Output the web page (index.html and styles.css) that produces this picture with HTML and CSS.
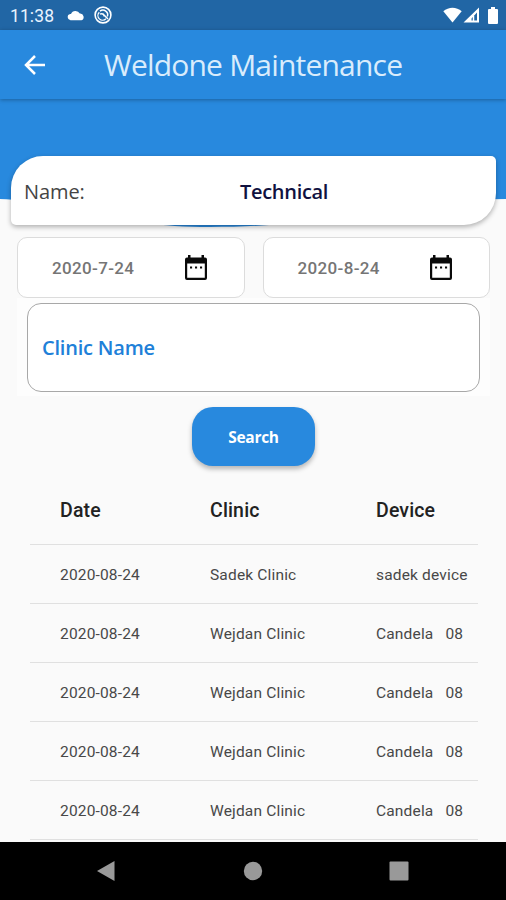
FILE: index.html
```html
<!DOCTYPE html>
<html lang="en">
<head>
  <meta charset="UTF-8"/>
  <meta name="viewport" content="width=device-width, initial-scale=1.0"/>
  <title>Weldone Maintenance</title>
  <link rel="stylesheet" href="styles.css">
</head>
<body>
  <!-- Status bar -->
  <div class="status">
    <span class="clock">11:38</span>
    <svg class="cloud" width="18" height="12" viewBox="0 0 18 12"><path d="M3.500 11.300a3.200 3.200 0 0 1-.3-6.300H4A4.800 4.800 0 0 1 12.800 4.600 3.500 3.500 0 0 1 14.500 11.300z" fill="#fff"/></svg>
    <svg width="18" height="18" viewBox="0 0 18 18" fill="none" stroke="#fff">
      <circle cx="9" cy="9" r="7.9" stroke-width="1.6"/>
      <path d="M5.300 6.200A4.700 4.700 0 1 0 12 12.800" stroke-width="1.300"/>
      <path d="M6 5.200A4.700 4.700 0 0 1 13.300 10.600" stroke-width="1.500"/>
      <path d="M6 8.200c2-1 4 .2 4.300 2.300M8.500 7.500l5.500 5.500" stroke-width="1.500"/>
    </svg>
    <div class="signals">
      <svg width="19" height="16" viewBox="0 0 19 16"><path d="M9.500 15.500.3 4.300C5.500-.4 13.500-.4 18.700 4.300z" fill="#fff"/></svg>
      <svg width="17" height="16" viewBox="0 0 17 16"><path d="M16 .5V15.500H.5zM14 5.500 8.500 11.500V13.600H14z" fill="#fff" fill-rule="evenodd"/><path d="M10.500 9V14" stroke="#fff" stroke-width="1.500"/></svg>
      <svg class="battery" width="10" height="17" viewBox="0 0 10 17"><path d="M3 0h4v2h2q1 0 1 1v13q0 1-1 1H1q-1 0-1-1V3q0-1 1-1h2z" fill="#fff"/></svg>
    </div>
  </div>

  <header>
    <svg class="back" width="22" height="20" viewBox="0 0 22 20"><path d="M21 10H2.500M11 1 2 10l9 9" fill="none" stroke="#fff" stroke-width="2.500"/></svg>
    <h1>Weldone Maintenance</h1>
  </header>

  <main>
    <svg class="wave" width="506" height="128" viewBox="0 0 506 128"><path d="M0 0H506V100C410 100 340 128 210 128C110 128 70 103 0 100z" fill="#2889de"/></svg>

    <div class="name-card">
      <span class="label">Name:</span>
      <span class="value">Technical</span>
    </div>

    <div class="dates">
      <div class="date">
        <span>2020-7-24</span>
        <svg width="24" height="27" viewBox="0 0 24 27"><path d="M4 1h2.500v2.500h11V1H20v2.500h1q2 0 2 2V24q0 2-2 2H3q-2 0-2-2V5.500q0-2 2-2h1zM3.200 9.500V23.800H20.800V9.500z" fill="#0a0a0a" fill-rule="evenodd"/><path d="M6 12.500h2.100v2H6zM11 12.500h2.100v2H11zM16 12.500h2.100v2H16z" fill="#0a0a0a"/></svg>
      </div>
      <div class="date">
        <span>2020-8-24</span>
        <svg width="24" height="27" viewBox="0 0 24 27"><path d="M4 1h2.500v2.500h11V1H20v2.500h1q2 0 2 2V24q0 2-2 2H3q-2 0-2-2V5.500q0-2 2-2h1zM3.200 9.500V23.800H20.800V9.500z" fill="#0a0a0a" fill-rule="evenodd"/><path d="M6 12.500h2.100v2H6zM11 12.500h2.100v2H11zM16 12.500h2.100v2H16z" fill="#0a0a0a"/></svg>
      </div>
    </div>

    <div class="clinic-wrap">
      <div class="clinic">Clinic Name</div>
    </div>

    <button class="search">Search</button>

    <table>
      <thead>
        <tr><th class="c1">Date</th><th class="c2">Clinic</th><th>Device</th></tr>
      </thead>
      <tbody>
        <tr><td>2020-08-24</td><td>Sadek Clinic</td><td>sadek device</td></tr>
        <tr><td>2020-08-24</td><td>Wejdan Clinic</td><td>Candela&nbsp;&nbsp; 08</td></tr>
        <tr><td>2020-08-24</td><td>Wejdan Clinic</td><td>Candela&nbsp;&nbsp; 08</td></tr>
        <tr><td>2020-08-24</td><td>Wejdan Clinic</td><td>Candela&nbsp;&nbsp; 08</td></tr>
        <tr><td>2020-08-24</td><td>Wejdan Clinic</td><td>Candela&nbsp;&nbsp; 08</td></tr>
      </tbody>
    </table>
  </main>

  <!-- Android navigation -->
  <nav>
    <svg width="20" height="22" viewBox="0 0 20 22"><path d="M18.500 1v20L1 11z" fill="#999"/></svg>
    <svg width="20" height="20" viewBox="0 0 20 20"><circle cx="10" cy="10" r="9.200" fill="#999"/></svg>
    <svg width="20" height="20" viewBox="0 0 20 20"><rect x=".5" y=".5" width="19" height="19" rx="1" fill="#999"/></svg>
  </nav>
</body>
</html>
```
FILE: styles.css
```css
* {
  box-sizing: border-box;
}

body {
  margin: 0;
  width: 506px;
  height: 900px;
  overflow: hidden;
  display: flex;
  flex-direction: column;
  background: #fafafa;
  font-family: Roboto, sans-serif;
}

svg {
  display: block;
  flex: none;
}

/* Status bar */
.status {
  flex: none;
  height: 30px;
  padding: 0 8px 0 10px;
  display: flex;
  align-items: center;
  background: #2166a5;
  color: #e8f3ff;
}

.clock {
  width: 57px;
  font-size: 17.5px;
  letter-spacing: 0.1px;
  padding-top: 2px;
}

.cloud {
  margin-right: 9px;
}

.signals {
  margin-left: auto;
  display: flex;
  align-items: center;
  gap: 1px;
}

.battery {
  margin-left: 7px;
}

/* App bar */
header {
  position: relative;
  z-index: 1;
  flex: none;
  height: 69px;
  padding-left: 24px;
  display: flex;
  align-items: center;
  background: #2889de;
  box-shadow: 0 1px 4px rgba(0, 0, 0, 0.3);
}

h1 {
  margin: 0 0 0 58px;
  color: #d9ecfc;
  font-family: "Open Sans", sans-serif;
  font-size: 30px;
  font-weight: 400;
  letter-spacing: -0.8px;
  line-height: 40px;
  white-space: nowrap;
}

main {
  position: relative;
  flex: none;
  height: 743px;
  padding-top: 57px;
  overflow: hidden;
}

.wave {
  position: absolute;
  top: 0;
  left: 0;
}

.name-card {
  position: relative;
  height: 69px;
  margin: 0 10px 0 11px;
  padding: 2px 0 0 13px;
  display: flex;
  align-items: center;
  background: #fff;
  border-radius: 32px 5px 32px 5px;
  box-shadow: 0 2px 5px rgba(0, 0, 0, 0.3);
  font-family: "Open Sans", sans-serif;
  font-size: 20px;
}

.label {
  width: 216px;
  color: #444;
  font-weight: 400;
  letter-spacing: -0.1px;
}

.value {
  color: #10113f;
  font-weight: 600;
  letter-spacing: -0.3px;
}

.dates {
  display: flex;
  gap: 18px;
  margin: 12px 16px 0 17px;
}

.date {
  flex: 1;
  height: 61px;
  padding: 0 36px 0 34px;
  display: flex;
  align-items: center;
  justify-content: space-between;
  background: #fff;
  border: 1px solid #dcdcdc;
  border-radius: 10px;
  color: #757575;
  font-size: 17px;
  font-weight: 500;
  letter-spacing: 0.35px;
}

.clinic-wrap {
  margin: 0 16px 0 17px;
  padding: 5px 10px 4px;
  background: #fdfdfd;
}

.clinic {
  height: 89px;
  padding-left: 14px;
  display: flex;
  align-items: center;
  background: #fff;
  border: 1px solid #a8a8a8;
  border-radius: 14px;
  color: #2080d8;
  font-family: "Open Sans", sans-serif;
  font-size: 20px;
  font-weight: 600;
  letter-spacing: -0.2px;
}

.search {
  display: block;
  width: 123px;
  height: 59px;
  margin: 11px 0 0 192px;
  padding: 0;
  background: #2889de;
  border: 0;
  border-radius: 21px;
  box-shadow: 0 3px 5px rgba(0, 0, 0, 0.28);
  color: #fff;
  font-family: "Open Sans", sans-serif;
  font-size: 15.5px;
  font-weight: 700;
  letter-spacing: -0.3px;
}

table {
  width: 448px;
  margin: 10px 0 0 30px;
  border-collapse: collapse;
  table-layout: fixed;
}

th, td {
  padding: 2px 0 0;
  text-align: left;
  white-space: nowrap;
  border-bottom: 1px solid #e0e0e0;
}

th {
  height: 68px;
  color: #222;
  font-size: 19.5px;
  font-weight: 500;
  letter-spacing: 0.15px;
}

td {
  height: 59.2px;
  color: #484848;
  font-size: 15.5px;
  letter-spacing: 0.17px;
}

th:first-child, td:first-child {
  padding-left: 30px;
}

.c1 {
  width: 180px;
}

.c2 {
  width: 166px;
}

/* Bottom nav */
nav {
  flex: none;
  height: 58px;
  padding: 0 97px 0 96px;
  display: flex;
  align-items: center;
  justify-content: space-between;
  background: #000;
}
```
